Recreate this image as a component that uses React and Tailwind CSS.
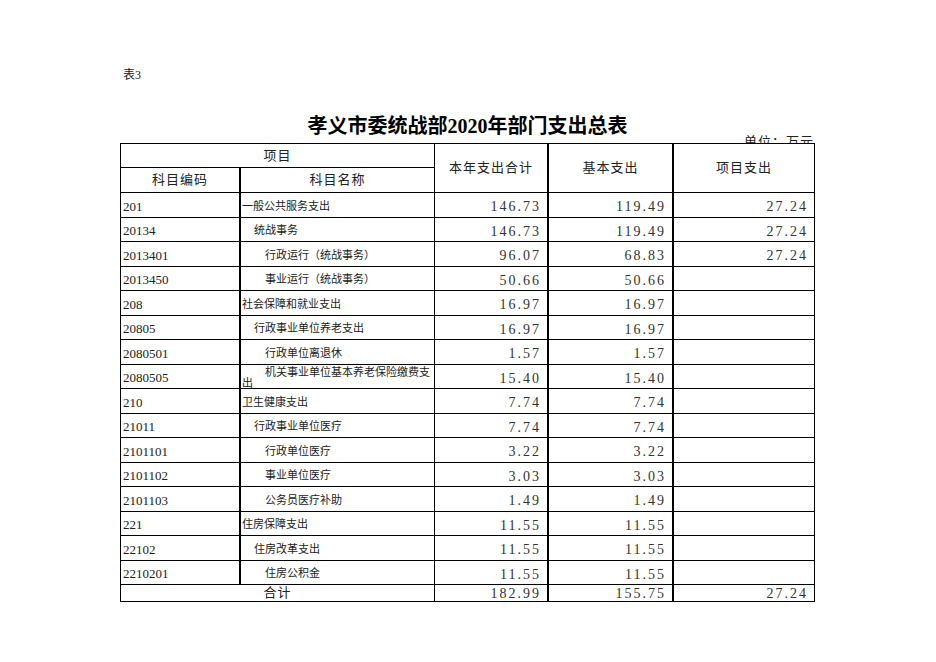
import React from 'react';

const rows = [
  { code: '201', name: '一般公共服务支出', lv: 0, total: '146.73', basic: '119.49', proj: '27.24' },
  { code: '20134', name: '统战事务', lv: 1, total: '146.73', basic: '119.49', proj: '27.24' },
  { code: '2013401', name: '行政运行（统战事务）', lv: 2, total: '96.07', basic: '68.83', proj: '27.24' },
  { code: '2013450', name: '事业运行（统战事务）', lv: 2, total: '50.66', basic: '50.66', proj: '' },
  { code: '208', name: '社会保障和就业支出', lv: 0, total: '16.97', basic: '16.97', proj: '' },
  { code: '20805', name: '行政事业单位养老支出', lv: 1, total: '16.97', basic: '16.97', proj: '' },
  { code: '2080501', name: '行政单位离退休', lv: 2, total: '1.57', basic: '1.57', proj: '' },
  { code: '2080505', name: 'wrap', lv: 2, total: '15.40', basic: '15.40', proj: '' },
  { code: '210', name: '卫生健康支出', lv: 0, total: '7.74', basic: '7.74', proj: '' },
  { code: '21011', name: '行政事业单位医疗', lv: 1, total: '7.74', basic: '7.74', proj: '' },
  { code: '2101101', name: '行政单位医疗', lv: 2, total: '3.22', basic: '3.22', proj: '' },
  { code: '2101102', name: '事业单位医疗', lv: 2, total: '3.03', basic: '3.03', proj: '' },
  { code: '2101103', name: '公务员医疗补助', lv: 2, total: '1.49', basic: '1.49', proj: '' },
  { code: '221', name: '住房保障支出', lv: 0, total: '11.55', basic: '11.55', proj: '' },
  { code: '22102', name: '住房改革支出', lv: 1, total: '11.55', basic: '11.55', proj: '' },
  { code: '2210201', name: '住房公积金', lv: 2, total: '11.55', basic: '11.55', proj: '' },
];

const indent = ['pl-[1px]', 'pl-[13px]', 'pl-[24px]'];

function Num({ v, className }) {
  return (
    <div className={`flex items-center justify-end pr-[6px] pt-[3px] text-[14px] tracking-[2px] text-[#333] ${className}`}>
      {v}
    </div>
  );
}

export default function App() {
  return (
    <div
      className="w-[936px] h-[662px] bg-white text-black"
      style={{ fontFamily: '"Liberation Serif", "Noto Sans CJK SC", serif' }}
    >
      <div className="pt-[68px] pl-[123px] text-[12px] leading-[14px] text-[#222]">表3</div>
      <div className="mt-[32px] ml-[120px] w-[695px] text-center text-[20px] font-bold leading-[24px]">
        孝义市委统战部2020年部门支出总表
      </div>

      <div className="relative mt-[5px] ml-[120px] w-[695px] border-l border-t border-black">
        <div className="absolute right-[1px] top-[-9px] h-[8px] overflow-hidden">
          <div className="text-[13px] leading-[13px] tracking-[1px] text-[#222]">单位：万元</div>
        </div>

        {/* header */}
        <div className="flex h-[49px] border-b border-black text-[13px] tracking-[1px] text-[#222]">
          <div className="flex w-[314px] flex-col border-r border-black">
            <div className="flex h-[24px] items-center justify-center border-b border-black">项目</div>
            <div className="flex flex-1">
              <div className="flex w-[120px] items-center justify-center border-r-2 border-black">科目编码</div>
              <div className="flex flex-1 items-center justify-center">科目名称</div>
            </div>
          </div>
          <div className="flex w-[114px] items-center justify-center border-r-2 border-black">本年支出合计</div>
          <div className="flex w-[125px] items-center justify-center border-r-2 border-black">基本支出</div>
          <div className="flex w-[141px] items-center justify-center border-r border-black">项目支出</div>
        </div>

        {rows.map((r, i) => (
          <div
            key={r.code}
            className={`flex border-b border-black ${i % 2 === 0 ? 'h-[25px]' : 'h-[24px]'}`}
          >
            <div className="flex w-[120px] items-center border-r-2 border-black pl-[2px] pt-[3px] text-[13px] text-[#222]">
              {r.code}
            </div>
            {r.name === 'wrap' ? (
              <div className="w-[194px] border-r border-black pt-[2px] text-[11px] leading-[11px] whitespace-nowrap text-[#222]">
                <div className="pl-[24px]">机关事业单位基本养老保险缴费支</div>
                <div className="pl-[1px]">出</div>
              </div>
            ) : (
              <div className={`flex w-[194px] items-center border-r border-black pt-[2px] text-[11px] whitespace-nowrap text-[#222] ${indent[r.lv]}`}>
                {r.name}
              </div>
            )}
            <Num v={r.total} className="w-[114px] border-r-2 border-black" />
            <Num v={r.basic} className="w-[125px] border-r-2 border-black" />
            <Num v={r.proj} className="w-[141px] border-r border-black" />
          </div>
        ))}

        <div className="flex h-[17px] border-b border-black">
          <div className="flex w-[314px] items-center justify-center border-r border-black text-[13px] tracking-[1px] text-[#222]">
            合计
          </div>
          <Num v="182.99" className="w-[114px] border-r-2 border-black !pt-0" />
          <Num v="155.75" className="w-[125px] border-r-2 border-black !pt-0" />
          <Num v="27.24" className="w-[141px] border-r border-black !pt-0" />
        </div>
      </div>
    </div>
  );
}
